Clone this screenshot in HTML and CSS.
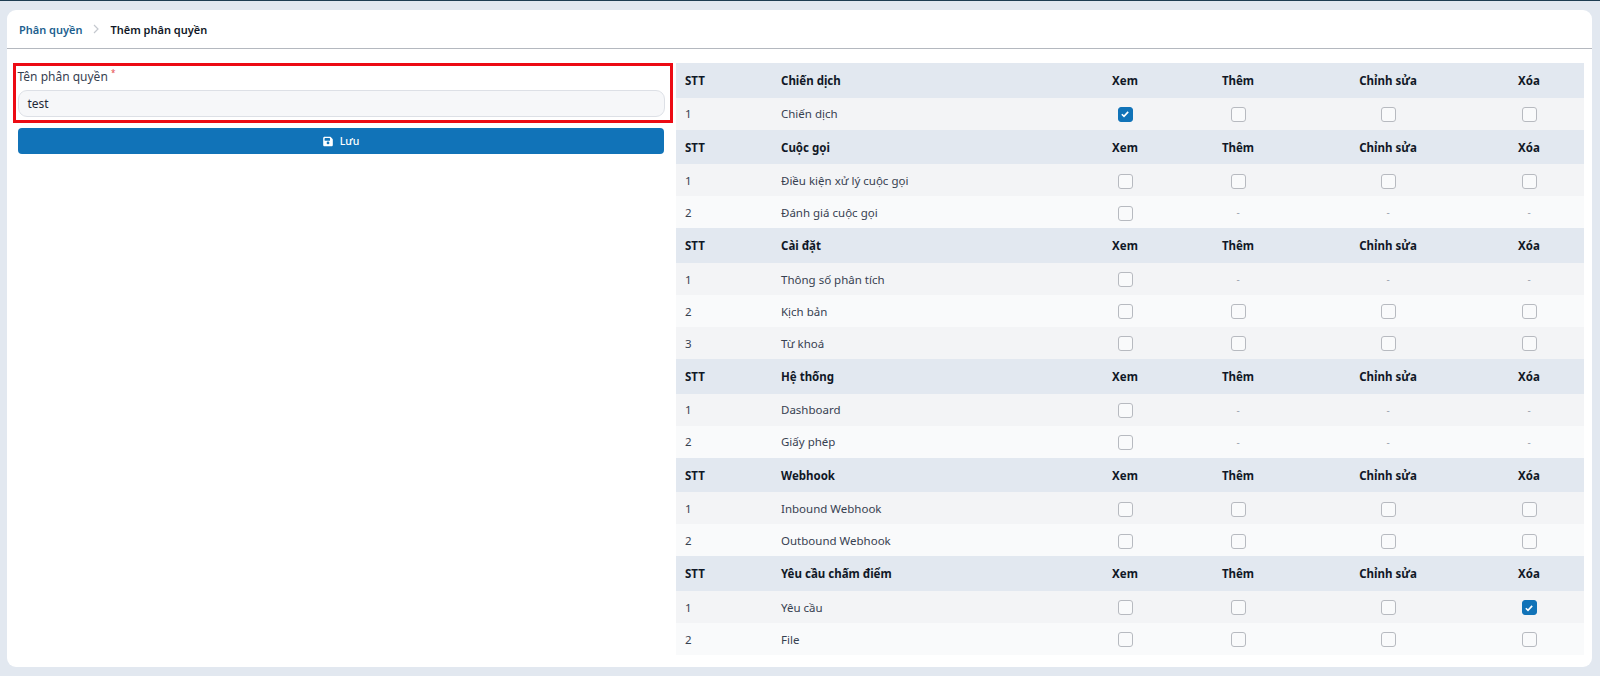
FILE: index.html
```html
<!DOCTYPE html>
<html lang="vi">
<head>
<meta charset="utf-8">
<title>Thêm phân quyền</title>
<link rel="stylesheet" href="styles.css">
</head>
<body>
<main class="card">
  <nav class="crumbs">
    <a class="crumb-link">Phân quyền</a>
    <svg class="crumb-sep" viewBox="0 0 8 10" width="8" height="10"><path d="M2 1l4 4-4 4" fill="none" stroke="#c4c8ce" stroke-width="1.2"/></svg>
    <span class="crumb-current">Thêm phân quyền</span>
  </nav>
  <div class="content">
    <form class="form-col">
      <div class="field">
        <label class="field-label">Tên phân quyền <sup class="req">*</sup></label>
        <div class="input">test</div>
      </div>
      <button type="button" class="save">
        <svg viewBox="0 0 448 512" width="10" height="11"><path fill="#fff" d="M64 32C29 32 0 61 0 96v320c0 35 29 64 64 64h320c35 0 64-29 64-64V173c0-17-7-33-19-45l-77-77c-12-12-28-19-45-19H64zm0 96c0-18 14-32 32-32h192c18 0 32 14 32 32v64c0 18-14 32-32 32H96c-18 0-32-14-32-32v-64zm160 128a64 64 0 1 1 0 128 64 64 0 1 1 0-128z"/></svg>
        <span>Lưu</span>
      </button>
    </form>
    <table class="perm">
      <colgroup><col class="c1"><col class="c2"><col class="c3"><col class="c4"><col class="c5"><col class="c6"></colgroup>
      <tbody>
        <tr class="head"><th class="left">STT</th><th class="left">Chiến dịch</th><th>Xem</th><th>Thêm</th><th>Chỉnh sửa</th><th>Xóa</th></tr>
        <tr class="odd"><td class="left">1</td><td class="left">Chiến dịch</td><td><span class="box on"><svg viewBox="0 0 12 12" width="10" height="10"><path d="M2.2 6.3l2.6 2.5 5-5.4" fill="none" stroke="#fff" stroke-width="2"/></svg></span></td><td><span class="box"></span></td><td><span class="box"></span></td><td><span class="box"></span></td></tr>

        <tr class="head"><th class="left">STT</th><th class="left">Cuộc gọi</th><th>Xem</th><th>Thêm</th><th>Chỉnh sửa</th><th>Xóa</th></tr>
        <tr class="odd"><td class="left">1</td><td class="left">Điều kiện xử lý cuộc gọi</td><td><span class="box"></span></td><td><span class="box"></span></td><td><span class="box"></span></td><td><span class="box"></span></td></tr>
        <tr class="even"><td class="left">2</td><td class="left">Đánh giá cuộc gọi</td><td><span class="box"></span></td><td class="dash">-</td><td class="dash">-</td><td class="dash">-</td></tr>

        <tr class="head"><th class="left">STT</th><th class="left">Cài đặt</th><th>Xem</th><th>Thêm</th><th>Chỉnh sửa</th><th>Xóa</th></tr>
        <tr class="odd"><td class="left">1</td><td class="left">Thông số phân tích</td><td><span class="box"></span></td><td class="dash">-</td><td class="dash">-</td><td class="dash">-</td></tr>
        <tr class="even"><td class="left">2</td><td class="left">Kịch bản</td><td><span class="box"></span></td><td><span class="box"></span></td><td><span class="box"></span></td><td><span class="box"></span></td></tr>
        <tr class="odd"><td class="left">3</td><td class="left">Từ khoá</td><td><span class="box"></span></td><td><span class="box"></span></td><td><span class="box"></span></td><td><span class="box"></span></td></tr>

        <tr class="head"><th class="left">STT</th><th class="left">Hệ thống</th><th>Xem</th><th>Thêm</th><th>Chỉnh sửa</th><th>Xóa</th></tr>
        <tr class="odd"><td class="left">1</td><td class="left">Dashboard</td><td><span class="box"></span></td><td class="dash">-</td><td class="dash">-</td><td class="dash">-</td></tr>
        <tr class="even"><td class="left">2</td><td class="left">Giấy phép</td><td><span class="box"></span></td><td class="dash">-</td><td class="dash">-</td><td class="dash">-</td></tr>

        <tr class="head"><th class="left">STT</th><th class="left">Webhook</th><th>Xem</th><th>Thêm</th><th>Chỉnh sửa</th><th>Xóa</th></tr>
        <tr class="odd"><td class="left">1</td><td class="left">Inbound Webhook</td><td><span class="box"></span></td><td><span class="box"></span></td><td><span class="box"></span></td><td><span class="box"></span></td></tr>
        <tr class="even"><td class="left">2</td><td class="left">Outbound Webhook</td><td><span class="box"></span></td><td><span class="box"></span></td><td><span class="box"></span></td><td><span class="box"></span></td></tr>

        <tr class="head"><th class="left">STT</th><th class="left">Yêu cầu chấm điểm</th><th>Xem</th><th>Thêm</th><th>Chỉnh sửa</th><th>Xóa</th></tr>
        <tr class="odd"><td class="left">1</td><td class="left">Yêu cầu</td><td><span class="box"></span></td><td><span class="box"></span></td><td><span class="box"></span></td><td><span class="box on"><svg viewBox="0 0 12 12" width="10" height="10"><path d="M2.2 6.3l2.6 2.5 5-5.4" fill="none" stroke="#fff" stroke-width="2"/></svg></span></td></tr>
        <tr class="even"><td class="left">2</td><td class="left">File</td><td><span class="box"></span></td><td><span class="box"></span></td><td><span class="box"></span></td><td><span class="box"></span></td></tr>
      </tbody>
    </table>
  </div>
</main>
</body>
</html>
```

FILE: styles.css
```css
* { box-sizing: border-box; }
html, body { height: 100%; }
body {
  margin: 0;
  padding: 10px 8px 9px 7px;
  background: #e2e8f0;
  border-top: 1px solid #1f3d52;
  font-family: "Noto Sans", "Open Sans", sans-serif;
  font-size: 11.5px;
  color: #374151;
  overflow: hidden;
}
.card {
  margin-top: -1px;
  height: 657px;
  background: #fff;
  border-radius: 9px;
  overflow: hidden;
}
.crumbs {
  height: 39px;
  padding-left: 12px;
  border-bottom: 1px solid #b4b8bf;
  display: flex;
  align-items: center;
  font-size: 11px;
  font-weight: 600;
}
.crumb-link { color: #1d5f8f; }
.crumb-sep { margin: 0 10px 0 10px; }
.crumb-current { color: #111827; }
.content {
  display: flex;
  align-items: flex-start;
  padding: 14px 8px 0 6px;
}
.form-col {
  width: 660px;
  flex: none;
}
.field {
  height: 60px;
  border: 3.5px solid #ec0b14;
  padding: 1px 5.5px 0 1.5px;
}
.field-label {
  display: block;
  height: 23px;
  line-height: 20px;
  font-size: 12px;
  color: #374151;
}
.req {
  color: #e5484d;
  font-size: 8px;
  line-height: 0;
  vertical-align: 5px;
}
.input {
  height: 27px;
  line-height: 25px;
  padding-left: 9px;
  border: 1px solid #dde0e6;
  border-radius: 9px;
  background: #f6f7f9;
  font-size: 12px;
  color: #1f2937;
}
.save {
  display: flex;
  align-items: center;
  justify-content: center;
  gap: 7px;
  width: 646px;
  height: 26px;
  margin: 5px 0 0 5px;
  padding: 0;
  border: 0;
  border-radius: 4px;
  background: #1173b8;
  color: #fff;
  font: 500 10.5px "Noto Sans", sans-serif;
}
.perm {
  width: 908px;
  flex: none;
  margin-left: 3px;
  table-layout: fixed;
  border-collapse: collapse;
}
.c1 { width: 96px; }
.c2 { width: 304px; }
.c3 { width: 98px; }
.c4 { width: 128px; }
.c5 { width: 172px; }
.c6 { width: 110px; }
th, td {
  padding: 0;
  text-align: center;
  vertical-align: middle;
}
th, td.left { text-align: center; }
.left { padding-left: 9px; }
th.left, td.left { text-align: left; }
.head { height: 34.7px; background: #e2e8f0; }
.head th { font-size: 11.5px; font-weight: 700; color: #111827; }
.odd { height: 32px; background: #f3f4f6; }
.even { height: 32px; background: #f9fafb; }
.dash { color: #9ca3af; font-size: 10px; }
.box {
  display: inline-flex;
  align-items: center;
  justify-content: center;
  width: 15px;
  height: 15px;
  vertical-align: middle;
  border: 1px solid #b7bac0;
  border-radius: 3px;
  background: #f9fafb;
}
.box.on {
  border-color: #1173b8;
  background: #1173b8;
}
```
